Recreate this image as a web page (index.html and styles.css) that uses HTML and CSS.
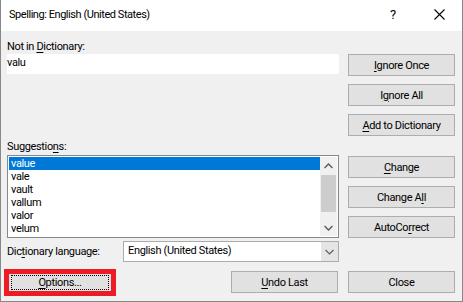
FILE: index.html
```html
<!DOCTYPE html>
<html lang="en">
<head>
    <meta charset="UTF-8">
    <title>Spelling: English (United States)</title>
    <link rel="stylesheet" href="styles.css">
</head>
<body>
    <div class="dialog">
        <div class="titlebar">
            <span class="title">Spelling: English (United States)</span>
            <span class="help">?</span>
            <span class="close">
                <svg width="11" height="11" viewBox="0 0 11 11"><path d="M0.5 0.5L10.5 10.5M10.5 0.5L0.5 10.5" stroke="#000" stroke-width="1.1" fill="none"/></svg>
            </span>
        </div>

        <div class="content">
            <div class="main">
                <div class="left">
                    <div class="label">Not in <u>D</u>ictionary:</div>
                    <div class="word">valu</div>

                    <div class="label suggest-label">Suggestio<u>n</u>s:</div>
                    <div class="listbox">
                        <ul class="items">
                            <li class="selected">value</li>
                            <li>vale</li>
                            <li>vault</li>
                            <li>vallum</li>
                            <li>valor</li>
                            <li>velum</li>
                        </ul>
                        <div class="scrollbar">
                            <div class="arrow">
                                <svg width="9" height="6" viewBox="0 0 9 6"><path d="M0.5 5L4.5 1L8.5 5" stroke="#606060" stroke-width="1.5" fill="none"/></svg>
                            </div>
                            <div class="track"><div class="thumb"></div></div>
                            <div class="arrow">
                                <svg width="9" height="6" viewBox="0 0 9 6"><path d="M0.5 1L4.5 5L8.5 1" stroke="#606060" stroke-width="1.5" fill="none"/></svg>
                            </div>
                        </div>
                    </div>

                    <div class="lang-row">
                        <span class="lang-label">Dic<u>t</u>ionary language:</span>
                        <div class="select">
                            <span class="select-text">English (United States)</span>
                            <span class="select-btn">
                                <svg width="9" height="6" viewBox="0 0 9 6"><path d="M0.5 1L4.5 5L8.5 1" stroke="#606060" stroke-width="1.2" fill="none"/></svg>
                            </span>
                        </div>
                    </div>
                </div>

                <div class="right">
                    <button class="btn"><u>I</u>gnore Once</button>
                    <button class="btn">I<u>g</u>nore All</button>
                    <button class="btn"><u>A</u>dd to Dictionary</button>
                    <button class="btn group-start"><u>C</u>hange</button>
                    <button class="btn">Change A<u>l</u>l</button>
                    <button class="btn">AutoCo<u>r</u>rect</button>
                </div>
            </div>

            <div class="bottom">
                <div class="highlight">
                    <button class="btn btn-focus"><span class="focus-ring"><u>O</u>ptions...</span></button>
                </div>
                <button class="btn btn-undo"><u>U</u>ndo Last</button>
                <button class="btn btn-close">Close</button>
            </div>
        </div>
    </div>
</body>
</html>
```

FILE: styles.css
```css
* {
    box-sizing: border-box;
}

body {
    margin: 0;
    font-family: Roboto, "Noto Sans", sans-serif;
    font-size: 11px;
    letter-spacing: -0.35px;
    color: #000;
}

.dialog {
    width: 463px;
    height: 302px;
    background: #f0f0f0;
    border: 1px solid #888;
    border-top: none;
}

.titlebar {
    height: 31px;
    background: #fff;
    display: flex;
    align-items: center;
    padding-left: 8px;
}

.title {
    flex: 1;
    font-size: 11px;
    letter-spacing: -0.45px;
    padding-bottom: 2px;
}

.help {
    width: 46px;
    text-align: center;
    font-size: 13px;
    padding-bottom: 2px;
}

.close {
    width: 46px;
    height: 31px;
    display: flex;
    align-items: center;
    justify-content: center;
    padding-bottom: 2px;
}

.content {
    padding: 8px 6px 0 6px;
}

.main {
    display: flex;
    gap: 9px;
}

.left {
    width: 332px;
}

.label {
    height: 15px;
    line-height: 15px;
    white-space: nowrap;
}

u {
    text-decoration-thickness: 1px;
    text-underline-offset: 2px;
}

.word {
    height: 20px;
    line-height: 17px;
    background: #fff;
}

.suggest-label {
    margin-top: 65px;
}

.listbox {
    margin-top: 1px;
    height: 83px;
    border: 1px solid #828790;
    background: #fff;
    display: flex;
    padding: 1px;
}

.items {
    flex: 1;
    list-style: none;
    margin: 0;
    padding: 0;
}

.items li {
    height: 13px;
    line-height: 13px;
    padding-left: 2px;
}

.items li.selected {
    background: #0078d7;
    color: #fff;
}

.scrollbar {
    width: 17px;
    background: #f0f0f0;
    display: flex;
    flex-direction: column;
}

.arrow {
    height: 17px;
    display: flex;
    align-items: center;
    justify-content: center;
}

.track {
    flex: 1;
    padding: 1px 1px 0 1px;
}

.thumb {
    height: 37px;
    background: #cdcdcd;
}

.lang-row {
    margin-top: 3px;
    height: 21px;
    display: flex;
    align-items: center;
}

.lang-label {
    width: 116px;
    white-space: nowrap;
}

.select {
    flex: 1;
    height: 21px;
    display: flex;
    border: 1px solid #acacac;
    background: #fff;
}

.select-text {
    flex: 1;
    padding-left: 4px;
    line-height: 18px;
}

.select-btn {
    width: 17px;
    background: #e5e5e5;
    display: flex;
    align-items: center;
    justify-content: center;
}

.right {
    width: 107px;
    padding-top: 15px;
    display: flex;
    flex-direction: column;
    gap: 8px;
}

.btn {
    height: 22px;
    width: 107px;
    background: #e1e1e1;
    border: 1px solid #adadad;
    font-family: inherit;
    font-size: 11px;
    letter-spacing: -0.35px;
    color: #000;
    padding: 0;
    white-space: nowrap;
}

.right .group-start {
    margin-top: 12px;
}

.bottom {
    margin-top: 7px;
    display: flex;
    align-items: flex-start;
    padding-right: 1px;
}

.highlight {
    margin-left: -3px;
    border: 5px solid #ed1c24;
    width: 112px;
    height: 27px;
    display: flex;
}

.btn-focus {
    width: 100%;
    height: 100%;
    border: none;
    padding: 1px 2px;
}

.focus-ring {
    display: flex;
    align-items: center;
    justify-content: center;
    height: 100%;
    border: 1px dotted #000;
}

.btn-undo {
    margin-top: 2px;
    margin-left: auto;
}

.btn-close {
    margin-top: 2px;
    margin-left: 10px;
}
```
